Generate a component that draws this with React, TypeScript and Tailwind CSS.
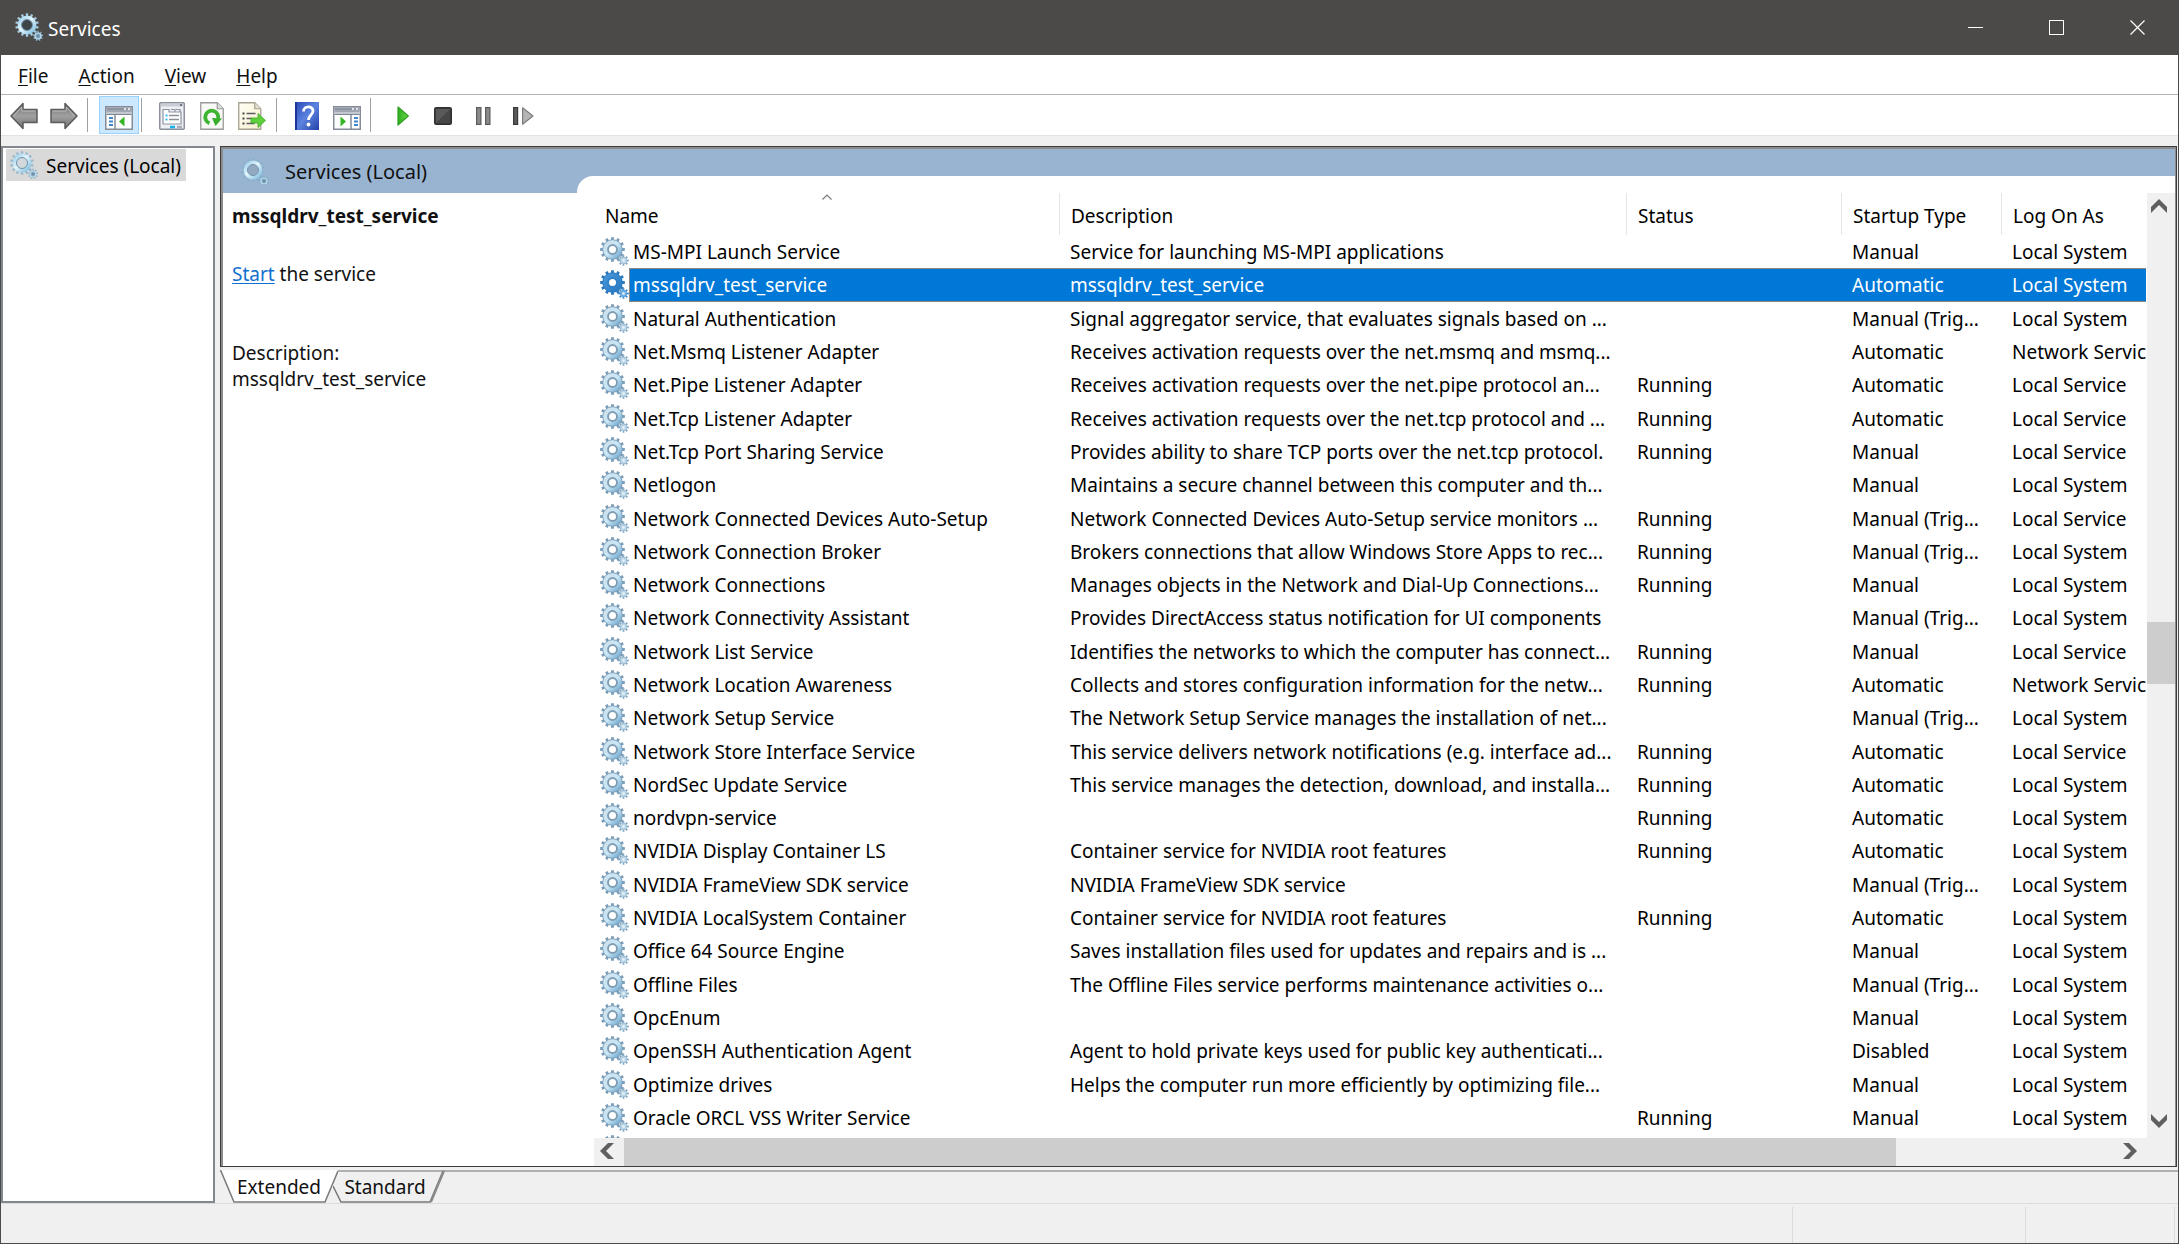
import type { ReactNode } from 'react';
import clsx from 'clsx';

interface Service {
  name: string;
  description: string;
  status: string;
  startup: string;
  logOn: string;
}

const SELECTED = 'mssqldrv_test_service';

const rows: [string, string, string, string, string][] = [
  ['MS-MPI Launch Service', 'Service for launching MS-MPI applications', '', 'Manual', 'Local System'],
  ['mssqldrv_test_service', 'mssqldrv_test_service', '', 'Automatic', 'Local System'],
  ['Natural Authentication', 'Signal aggregator service, that evaluates signals based on ...', '', 'Manual (Trig...', 'Local System'],
  ['Net.Msmq Listener Adapter', 'Receives activation requests over the net.msmq and msmq...', '', 'Automatic', 'Network Service'],
  ['Net.Pipe Listener Adapter', 'Receives activation requests over the net.pipe protocol an...', 'Running', 'Automatic', 'Local Service'],
  ['Net.Tcp Listener Adapter', 'Receives activation requests over the net.tcp protocol and ...', 'Running', 'Automatic', 'Local Service'],
  ['Net.Tcp Port Sharing Service', 'Provides ability to share TCP ports over the net.tcp protocol.', 'Running', 'Manual', 'Local Service'],
  ['Netlogon', 'Maintains a secure channel between this computer and th...', '', 'Manual', 'Local System'],
  ['Network Connected Devices Auto-Setup', 'Network Connected Devices Auto-Setup service monitors ...', 'Running', 'Manual (Trig...', 'Local Service'],
  ['Network Connection Broker', 'Brokers connections that allow Windows Store Apps to rec...', 'Running', 'Manual (Trig...', 'Local System'],
  ['Network Connections', 'Manages objects in the Network and Dial-Up Connections...', 'Running', 'Manual', 'Local System'],
  ['Network Connectivity Assistant', 'Provides DirectAccess status notification for UI components', '', 'Manual (Trig...', 'Local System'],
  ['Network List Service', 'Identifies the networks to which the computer has connect...', 'Running', 'Manual', 'Local Service'],
  ['Network Location Awareness', 'Collects and stores configuration information for the netw...', 'Running', 'Automatic', 'Network Service'],
  ['Network Setup Service', 'The Network Setup Service manages the installation of net...', '', 'Manual (Trig...', 'Local System'],
  ['Network Store Interface Service', 'This service delivers network notifications (e.g. interface ad...', 'Running', 'Automatic', 'Local Service'],
  ['NordSec Update Service', 'This service manages the detection, download, and installa...', 'Running', 'Automatic', 'Local System'],
  ['nordvpn-service', '', 'Running', 'Automatic', 'Local System'],
  ['NVIDIA Display Container LS', 'Container service for NVIDIA root features', 'Running', 'Automatic', 'Local System'],
  ['NVIDIA FrameView SDK service', 'NVIDIA FrameView SDK service', '', 'Manual (Trig...', 'Local System'],
  ['NVIDIA LocalSystem Container', 'Container service for NVIDIA root features', 'Running', 'Automatic', 'Local System'],
  ['Office 64 Source Engine', 'Saves installation files used for updates and repairs and is ...', '', 'Manual', 'Local System'],
  ['Offline Files', 'The Offline Files service performs maintenance activities o...', '', 'Manual (Trig...', 'Local System'],
  ['OpcEnum', '', '', 'Manual', 'Local System'],
  ['OpenSSH Authentication Agent', 'Agent to hold private keys used for public key authenticati...', '', 'Disabled', 'Local System'],
  ['Optimize drives', 'Helps the computer run more efficiently by optimizing file...', '', 'Manual', 'Local System'],
  ['Oracle ORCL VSS Writer Service', '', 'Running', 'Manual', 'Local System'],
];

const services: Service[] = rows.map(([name, description, status, startup, logOn]) => ({
  name,
  description,
  status,
  startup,
  logOn,
}));

// Outline of a cog: n square teeth between the inner and outer radius
function cog(cx: number, cy: number, outer: number, inner: number, n: number) {
  const pts: string[] = [];
  for (let i = 0; i < n; i++) {
    const a = (i * 2 * Math.PI) / n - Math.PI / 2;
    const w = Math.PI / n;
    [
      [inner, -w * 0.55],
      [outer, -w * 0.45],
      [outer, w * 0.45],
      [inner, w * 0.55],
    ].forEach(([r, d]) => {
      pts.push(`${(cx + r * Math.cos(a + d)).toFixed(2)} ${(cy + r * Math.sin(a + d)).toFixed(2)}`);
    });
  }
  return `M${pts.join('L')}Z`;
}

// Solid cog used for each service in the list
function ListGear({ selected }: { selected?: boolean }) {
  const fill = selected ? 'url(#gearSelected)' : 'url(#gearList)';
  const edge = selected ? '#2b79bd' : '#7b9db8';
  return (
    <svg width="29" height="29" viewBox="0 0 29 29" className="shrink-0">
      <path d={cog(12.5, 12.5, 12.4, 9.8, 12)} fill={edge} />
      <circle cx="12.5" cy="12.5" r="9.8" fill={fill} stroke={edge} strokeWidth="0.8" />
      <circle cx="12.5" cy="12.5" r="5.4" fill={selected ? '#2f80c8' : '#7f9db3'} />
      <circle cx="12.5" cy="12.5" r="3.5" fill="#fff" />
      <path d={cog(23.5, 23.5, 5.4, 3.6, 8)} fill={selected ? '#3d8ccd' : '#7fa5c0'} />
      <circle cx="23.5" cy="23.5" r="3.2" fill={selected ? '#6fb0e4' : '#b9d5e6'} />
      <circle cx="23.5" cy="23.5" r="1.3" fill="#eaf4fa" />
    </svg>
  );
}

// Open ring cog used in the title bar, the tree and the banner
function RingGear({ faint, hole }: { faint?: boolean; hole: string }) {
  return (
    <svg width="28" height="29" viewBox="0 0 28 29" className="shrink-0">
      <path d={cog(12, 12, 11.8, 9, 14)} fill={faint ? '#86b0ca' : '#a3cbe0'} opacity={faint ? 0.8 : 1} />
      <circle cx="12" cy="12" r="7.4" fill={hole} stroke="url(#gearRing)" strokeWidth="4" />
      <circle cx="12" cy="12" r="5.5" fill="none" stroke="#6e93ad" strokeWidth="1" />
      <path d={cog(23, 23, 5.2, 3.6, 9)} fill="#7ea8c4" opacity={faint ? 0.8 : 1} />
      <circle cx="23" cy="23" r="3" fill="none" stroke="#bcdcec" strokeWidth="1.2" />
      <circle cx="23" cy="23" r="1.5" fill="#6f8fa4" />
    </svg>
  );
}

function GearGradients() {
  return (
    <svg width="0" height="0" className="absolute" aria-hidden="true">
      <defs>
        <linearGradient id="gearList" x1="0" y1="0" x2="1" y2="1">
          <stop offset="0" stopColor="#cfe0ea" />
          <stop offset="0.5" stopColor="#c9e6f6" />
          <stop offset="1" stopColor="#5797c4" />
        </linearGradient>
        <linearGradient id="gearSelected" x1="0" y1="0" x2="1" y2="1">
          <stop offset="0" stopColor="#4e9bdb" />
          <stop offset="1" stopColor="#2476c0" />
        </linearGradient>
        <linearGradient id="gearRing" x1="0" y1="0" x2="1" y2="1">
          <stop offset="0" stopColor="#9fd0ea" />
          <stop offset="0.45" stopColor="#e3f5fc" />
          <stop offset="1" stopColor="#84bfe0" />
        </linearGradient>
        <linearGradient id="grey" x1="0" y1="0" x2="0" y2="1">
          <stop offset="0" stopColor="#6f6f6f" />
          <stop offset="0.5" stopColor="#a0a0a0" />
          <stop offset="1" stopColor="#707070" />
        </linearGradient>
        <linearGradient id="help" x1="0" y1="0" x2="1" y2="1">
          <stop offset="0" stopColor="#2b49b8" />
          <stop offset="0.5" stopColor="#5c83e0" />
          <stop offset="1" stopColor="#2541a8" />
        </linearGradient>
        <linearGradient id="play" x1="0" y1="0" x2="1" y2="0">
          <stop offset="0" stopColor="#2fae20" />
          <stop offset="1" stopColor="#6ad84c" />
        </linearGradient>
        <linearGradient id="page" x1="0" y1="0" x2="1" y2="1">
          <stop offset="0" stopColor="#fffef4" />
          <stop offset="1" stopColor="#f6efcf" />
        </linearGradient>
      </defs>
    </svg>
  );
}

function ArrowIcon({ flip }: { flip?: boolean }) {
  return (
    <svg width="28" height="28" viewBox="0 0 28 28" className={flip ? '-scale-x-100' : ''}>
      <path d="M1 14 13 1.5V7.5H27V20.5H13V26.5Z" fill="url(#grey)" stroke="#5c5c5c" strokeWidth="1.5" strokeLinejoin="round" />
      <path d="M3.5 14 11.8 5V9H25.5" fill="none" stroke="#b9b9b9" strokeWidth="1" />
    </svg>
  );
}

// Window with a side pane; mirrored for the action pane
function PaneIcon({ action }: { action?: boolean }) {
  return (
    <svg width="28" height="24" viewBox="0 0 28 24" className="mt-1">
      <rect x="0.75" y="0.75" width="26.5" height="22.5" fill="#fff" stroke="#858c98" strokeWidth="1.5" />
      <path d="M1.5 1.5h25v3h-25z" fill="#8d95a3" />
      <path d="M1.5 4.5h25v4h-25z" fill="#c3c8d0" />
      <path d="M1.5 8.5h25M1.5 5h25" stroke="#7f8693" strokeWidth="1" />
      <path d="M19 3h2M23 3h2" stroke="#fff" strokeWidth="1.5" />
      {action ? (
        <>
          <path d="M18 9v14" stroke="#858c98" strokeWidth="1.5" />
          <path d="M21 12h4M21 15.500h4M21 19h4" stroke="#3f86cf" strokeWidth="1.8" />
          <path d="M7.500 10.500v10l5.500-5z" fill="#35b526" />
        </>
      ) : (
        <>
          <path d="M10 9v14" stroke="#858c98" strokeWidth="1.5" />
          <path d="M4 12h4M4 15.500h4M4 19h4" stroke="#3f86cf" strokeWidth="1.8" />
          <path d="M19.500 10.500v10l-5.500-5z" fill="#35b526" />
        </>
      )}
    </svg>
  );
}

function PropertiesIcon() {
  return (
    <svg width="26" height="28" viewBox="0 0 26 28">
      <rect x="0.75" y="0.75" width="24.500" height="26.500" rx="1" fill="#eef0f3" stroke="#8a8f99" strokeWidth="1.5" />
      <path d="M2 3h22" stroke="#c9cdd4" strokeWidth="3" />
      <path d="M21 3h2" stroke="#4b566b" strokeWidth="1.5" />
      <path d="M4 7.500h6v2.500h12v12H4z" fill="#fff" stroke="#8d94a2" strokeWidth="1.2" />
      <path d="M12 7.500h4v2.500M17 7.500h4v2.500" fill="none" stroke="#8d94a2" strokeWidth="1.2" />
      <path d="M6.500 13.500h2M6.500 17.500h2" stroke="#2fb9ea" strokeWidth="1.8" />
      <path d="M10 13.500h10M10 17.500h10" stroke="#8b8f98" strokeWidth="1.3" />
      <path d="M11 25h5" stroke="#15b4ec" strokeWidth="2.500" />
      <path d="M18 25h5" stroke="#a9aeb8" strokeWidth="2.500" />
    </svg>
  );
}

function RefreshIcon() {
  return (
    <svg width="24" height="28" viewBox="0 0 24 28">
      <path d="M.75.75h16.500l6 6v20.500H.75z" fill="#f8f8f6" stroke="#9a9a98" strokeWidth="1.3" />
      <path d="M17.250.75v6h6" fill="#dedede" stroke="#9a9a98" strokeWidth="1.2" />
      <path d="M9.500 21.300A6.500 6.500 0 1 1 18 17" fill="none" stroke="#3db531" strokeWidth="3.800" />
      <path d="M12 16 22 16.500l-6.500 7.500z" fill="#36ad2b" />
    </svg>
  );
}

function ExportIcon() {
  return (
    <svg width="28" height="28" viewBox="0 0 28 28">
      <path d="M.75.75h16l6 6v20.500h-22z" fill="url(#page)" stroke="#a5a190" strokeWidth="1.3" />
      <path d="M16.750.75v6h6" fill="#e4e0d0" stroke="#a5a190" strokeWidth="1.2" />
      <path d="M4.500 11.500h2M4.500 16.500h2M4.500 21.500h2" stroke="#444" strokeWidth="1.8" />
      <path d="M8.500 11.500h9M8.500 16.500h5M8.500 21.500h8" stroke="#5b5b66" strokeWidth="1.5" />
      <path d="M13 16h7v-4.500l7.500 7-7.500 7V21h-7z" fill="#5fd03b" stroke="#3fa72a" strokeWidth="0.8" />
    </svg>
  );
}

function HelpIcon() {
  return (
    <svg width="24" height="28" viewBox="0 0 24 28">
      <rect width="24" height="28" fill="url(#help)" />
      <path d="M1 0v28" stroke="#1d3795" strokeWidth="2" />
      <path d="M8.500 9.500c0-6 9.500-6 9.500-.5 0 4-4.500 4-4.500 9" fill="none" stroke="#fff" strokeWidth="2.800" />
      <circle cx="13.500" cy="22.500" r="1.900" fill="#fff" />
    </svg>
  );
}

function PlayIcon() {
  return (
    <svg width="12" height="20" viewBox="0 0 12 20">
      <path d="M1 1 11.300 10 1 19z" fill="url(#play)" stroke="#2ba01d" strokeWidth="1.200" strokeLinejoin="round" />
    </svg>
  );
}

function StopIcon() {
  return (
    <svg width="18" height="18" viewBox="0 0 18 18">
      <rect x="0.75" y="0.75" width="16.500" height="16.500" rx="1.500" fill="#474747" stroke="#2f2f2f" strokeWidth="1.5" />
      <path d="M2 2h14L2 16z" fill="#5a5a5a" />
    </svg>
  );
}

function PauseIcon() {
  return (
    <svg width="15" height="18" viewBox="0 0 15 18">
      <rect x="0.600" y="0.600" width="4.300" height="16.800" fill="#8b8b8b" stroke="#5b5b5b" strokeWidth="1.200" />
      <rect x="9.600" y="0.600" width="4.300" height="16.800" fill="#8b8b8b" stroke="#5b5b5b" strokeWidth="1.200" />
    </svg>
  );
}

function RestartIcon() {
  return (
    <svg width="21" height="18" viewBox="0 0 21 18">
      <rect x="0.600" y="0.600" width="4" height="16.800" fill="#5a5a5a" stroke="#3a3a3a" strokeWidth="1.200" />
      <path d="M9.600.800 20 9 9.600 17.200z" fill="#b5b5b5" stroke="#7c7c7c" strokeWidth="1.200" strokeLinejoin="round" />
    </svg>
  );
}

function Chevron({ className }: { className?: string }) {
  return (
    <svg width="16" height="14" viewBox="0 0 16 14" className={className}>
      <path d="M0 14V8L8 0l8 8v6L8 6z" fill="#606060" />
    </svg>
  );
}

function ToolButton({ label, active, children }: { label: string; active?: boolean; children: ReactNode }) {
  return (
    <button
      type="button"
      aria-label={label}
      className={clsx(
        'flex h-[38px] w-10 items-center justify-center border pt-px',
        active ? 'border-[#99d1ff] bg-[#cce8ff]' : 'border-transparent',
      )}
    >
      {children}
    </button>
  );
}

function Separator({ className }: { className: string }) {
  return <div className={clsx('h-[34px] w-px bg-[#a0a0a0]', className)} />;
}

function TitleBar() {
  return (
    <header className="flex h-[55px] shrink-0 items-center bg-[#4c4a48] pl-[14px] text-white">
      <RingGear hole="#3f4448" />
      <h1 className="ml-[5px] flex-1 pt-0.5">Services</h1>
      <button type="button" aria-label="Minimize" className="flex h-full w-[81px] items-center justify-center">
        <svg width="15" height="15" viewBox="0 0 15 15">
          <path d="M0 7.500h15" stroke="#fff" />
        </svg>
      </button>
      <button type="button" aria-label="Maximize" className="flex h-full w-[81px] items-center justify-center">
        <svg width="15" height="15" viewBox="0 0 15 15">
          <rect x="0.500" y="0.500" width="14" height="14" fill="none" stroke="#fff" />
        </svg>
      </button>
      <button type="button" aria-label="Close" className="flex h-full w-[81px] items-center justify-center">
        <svg width="15" height="15" viewBox="0 0 15 15">
          <path d="M.5.5l14 14M14.500.5l-14 14" stroke="#fff" strokeWidth="1.200" />
        </svg>
      </button>
    </header>
  );
}

function MenuBar() {
  return (
    <nav className="flex h-10 shrink-0 items-center border-b border-[#b4b4b4] bg-white pl-[2px] pt-0.5">
      {['File', 'Action', 'View', 'Help'].map((item) => (
        <button key={item} type="button" className="px-[15px]">
          <span className="underline underline-offset-2">{item[0]}</span>
          {item.slice(1)}
        </button>
      ))}
    </nav>
  );
}

function Toolbar() {
  return (
    <div className="flex h-[41px] shrink-0 items-center border-b border-[#e3e3e3] bg-white pl-[3px]">
      <ToolButton label="Back"><ArrowIcon /></ToolButton>
      <ToolButton label="Forward"><ArrowIcon flip /></ToolButton>
      <Separator className="ml-[3px] mr-[11px]" />
      <ToolButton label="Show/Hide Console Tree" active><PaneIcon /></ToolButton>
      <Separator className="ml-[2px] mr-[10px]" />
      <ToolButton label="Properties"><PropertiesIcon /></ToolButton>
      <ToolButton label="Refresh"><RefreshIcon /></ToolButton>
      <ToolButton label="Export List"><ExportIcon /></ToolButton>
      <Separator className="ml-[4px] mr-[10px]" />
      <ToolButton label="Help"><HelpIcon /></ToolButton>
      <ToolButton label="Show/Hide Action Pane"><PaneIcon action /></ToolButton>
      <Separator className="ml-[3px] mr-[12px]" />
      <ToolButton label="Start Service"><PlayIcon /></ToolButton>
      <ToolButton label="Stop Service"><StopIcon /></ToolButton>
      <ToolButton label="Pause Service"><PauseIcon /></ToolButton>
      <ToolButton label="Restart Service"><RestartIcon /></ToolButton>
    </div>
  );
}

function DetailPane() {
  return (
    <section className="w-[354px] shrink-0">
      <div className="flex h-11 items-center bg-[#99b4d1] pl-[18px] pt-0.5 text-xl">
        <RingGear faint hole="#93a9bf" />
        <h2 className="ml-4">Services (Local)</h2>
      </div>
      <div className="pl-[9px] pt-[10px]">
        <h3 className="font-bold">mssqldrv_test_service</h3>
        <p className="mt-8">
          <a href="#start" className="text-[#0f6fd0] underline underline-offset-2">Start</a> the service
        </p>
        <p className="mt-[53px]">Description:</p>
        <p>mssqldrv_test_service</p>
      </div>
    </section>
  );
}

const columns = [
  { label: 'Name', width: 'w-[466px]' },
  { label: 'Description', width: 'w-[567px]' },
  { label: 'Status', width: 'w-[215px]' },
  { label: 'Startup Type', width: 'w-[160px]' },
  { label: 'Log On As', width: 'w-[144px]' },
];

function ServiceTable() {
  return (
    <table className="flex min-h-0 min-w-0 flex-1 flex-col overflow-hidden whitespace-nowrap text-black">
      <thead className="block">
        <tr className="flex h-[42px]">
          {columns.map((col, i) => (
            <th
              key={col.label}
              className={clsx(
                'relative flex shrink-0 items-center pl-[11px] pt-1 font-normal',
                col.width,
                i < 4 && 'border-r border-[#e5e5e5]',
              )}
            >
              {col.label}
              {i === 0 && (
                <svg width="10" height="6" viewBox="0 0 10 6" className="absolute left-1/2 top-px -translate-x-1/2">
                  <path d="M.5 5.500 5 1l4.500 4.500" fill="none" stroke="#7a7a7a" strokeWidth="1.2" />
                </svg>
              )}
            </th>
          ))}
        </tr>
      </thead>
      <tbody className="flex min-h-0 flex-1 flex-col">
        {services.map((s) => {
          const selected = s.name === SELECTED;
          const cell = clsx(
            'flex shrink-0 items-center overflow-hidden border-y pl-[11px] pt-px',
            selected ? 'border-[#8c8780] bg-[#0078d7] text-white' : 'border-transparent',
          );
          return (
            <tr key={s.name} className="flex min-h-0 flex-1">
              <td className="flex w-[465px] shrink-0 items-center pl-[6px]">
                <ListGear selected={selected} />
                <span
                  className={clsx(
                    'flex flex-1 items-center self-stretch border pl-[3px] pt-px',
                    selected ? 'border-r-0 border-[#8c8780] bg-[#0078d7] text-white' : 'border-transparent',
                  )}
                >
                  {s.name}
                </span>
              </td>
              <td className={clsx(cell, 'w-[567px]')}>{s.description}</td>
              <td className={clsx(cell, 'w-[215px]')}>{s.status}</td>
              <td className={clsx(cell, 'w-[160px]')}>{s.startup}</td>
              <td className={clsx(cell, 'w-[145px]')}>{s.logOn}</td>
            </tr>
          );
        })}
        {/* top edge of the next service, cut off by the scroll bar */}
        <tr className="flex h-1 shrink-0 items-start overflow-hidden">
          <td className="pl-[6px] pt-px">
            <ListGear />
          </td>
        </tr>
      </tbody>
    </table>
  );
}

function ListPane() {
  return (
    <section className="min-w-0 flex-1 bg-[#99b4d1] pt-[27px]">
      <div className="flex h-full flex-col rounded-tl-[16px] bg-white pl-[17px] pt-[17px]">
        <div className="flex min-h-0 flex-1">
          <ServiceTable />
          <div className="flex w-7 shrink-0 flex-col items-center bg-[#f0f0f0]">
            <button type="button" aria-label="Scroll up" className="flex h-[30px] items-center pb-1 pr-1"><Chevron /></button>
            <div className="flex-[399]" />
            <div className="w-full flex-[61] bg-[#cdcdcd]" />
            <div className="flex-[424]" />
            <button type="button" aria-label="Scroll down" className="flex h-[30px] items-center pb-1 pr-1"><Chevron className="rotate-180" /></button>
          </div>
        </div>
        <div className="flex h-7 shrink-0 items-center bg-[#f0f0f0] pr-7">
          <button type="button" aria-label="Scroll left" className="flex w-[30px] justify-center pb-0.5 pr-1"><Chevron className="-rotate-90" /></button>
          <div className="h-full flex-[1270] bg-[#cdcdcd]" />
          <div className="flex-[221]" />
          <button type="button" aria-label="Scroll right" className="flex w-[30px] justify-center pb-0.5 pr-1"><Chevron className="rotate-90" /></button>
        </div>
      </div>
    </section>
  );
}

// Slanted sheet tabs under the list
function ViewTabs() {
  return (
    <div className="flex h-[33px] shrink-0 border-t-2 border-[#b0b0b0]">
      <button type="button" className="relative -mt-[2px] h-[33px] w-[118px]">
        <svg width="118" height="33" viewBox="0 0 118 33" className="absolute inset-0">
          <path d="M0 0 14 32H105L118 0z" fill="#fff" />
          <path d="M.5 0 14 32H105L118 1" fill="none" stroke="#7a7a7a" strokeWidth="1.500" />
        </svg>
        <span className="relative">Extended</span>
      </button>
      <button type="button" className="relative -ml-[5px] -mt-[2px] h-[33px] w-[112px] pr-2">
        <svg width="112" height="33" viewBox="0 0 112 33" className="absolute inset-0">
          <path d="M0 16 8 32H97L110 1" fill="none" stroke="#7a7a7a" strokeWidth="1.500" />
          <path d="M98 32 111 1" stroke="#8a8a8a" strokeWidth="2" />
        </svg>
        <span className="relative">Standard</span>
      </button>
    </div>
  );
}

function StatusBar() {
  return (
    <footer className="flex h-10 shrink-0 border-t border-[#dcdcdc] pr-[3px] pt-[3px]">
      <div className="flex-1 border-r border-[#dcdcdc]" />
      <div className="w-[233px] border-r border-[#dcdcdc]" />
      <div className="w-[149px] border-r border-[#dcdcdc]" />
    </footer>
  );
}

export default function App() {
  return (
    <div className='flex h-screen flex-col overflow-hidden border-x border-b border-[#4c4a48] bg-[#f0f0f0] font-["Noto_Sans","Open_Sans",sans-serif] text-[19px] leading-[26px] text-[#111]'>
      <GearGradients />
      <TitleBar />
      <MenuBar />
      <Toolbar />
      <main className="flex min-h-0 flex-1 pt-[10px]">
        <aside className="w-[214px] shrink-0 border-2 border-[#828790] bg-white">
          <div className="ml-[3px] mt-px flex h-8 w-[180px] items-center bg-[#d9d9d9] pl-1">
            <RingGear faint hole="#d3d8dc" />
            <span className="ml-2 pt-0.5 text-black">Services (Local)</span>
          </div>
        </aside>
        <div className="ml-[5px] flex min-w-0 flex-1 flex-col">
          <div className="mb-[3px] mr-px flex min-h-0 flex-1 border border-[#3c3c3c] bg-white">
            <div className="flex min-w-0 flex-1 border-l-2 border-r border-t-2 border-[#8c8c8c]">
              <DetailPane />
              <ListPane />
            </div>
          </div>
          <ViewTabs />
        </div>
      </main>
      <StatusBar />
    </div>
  );
}
